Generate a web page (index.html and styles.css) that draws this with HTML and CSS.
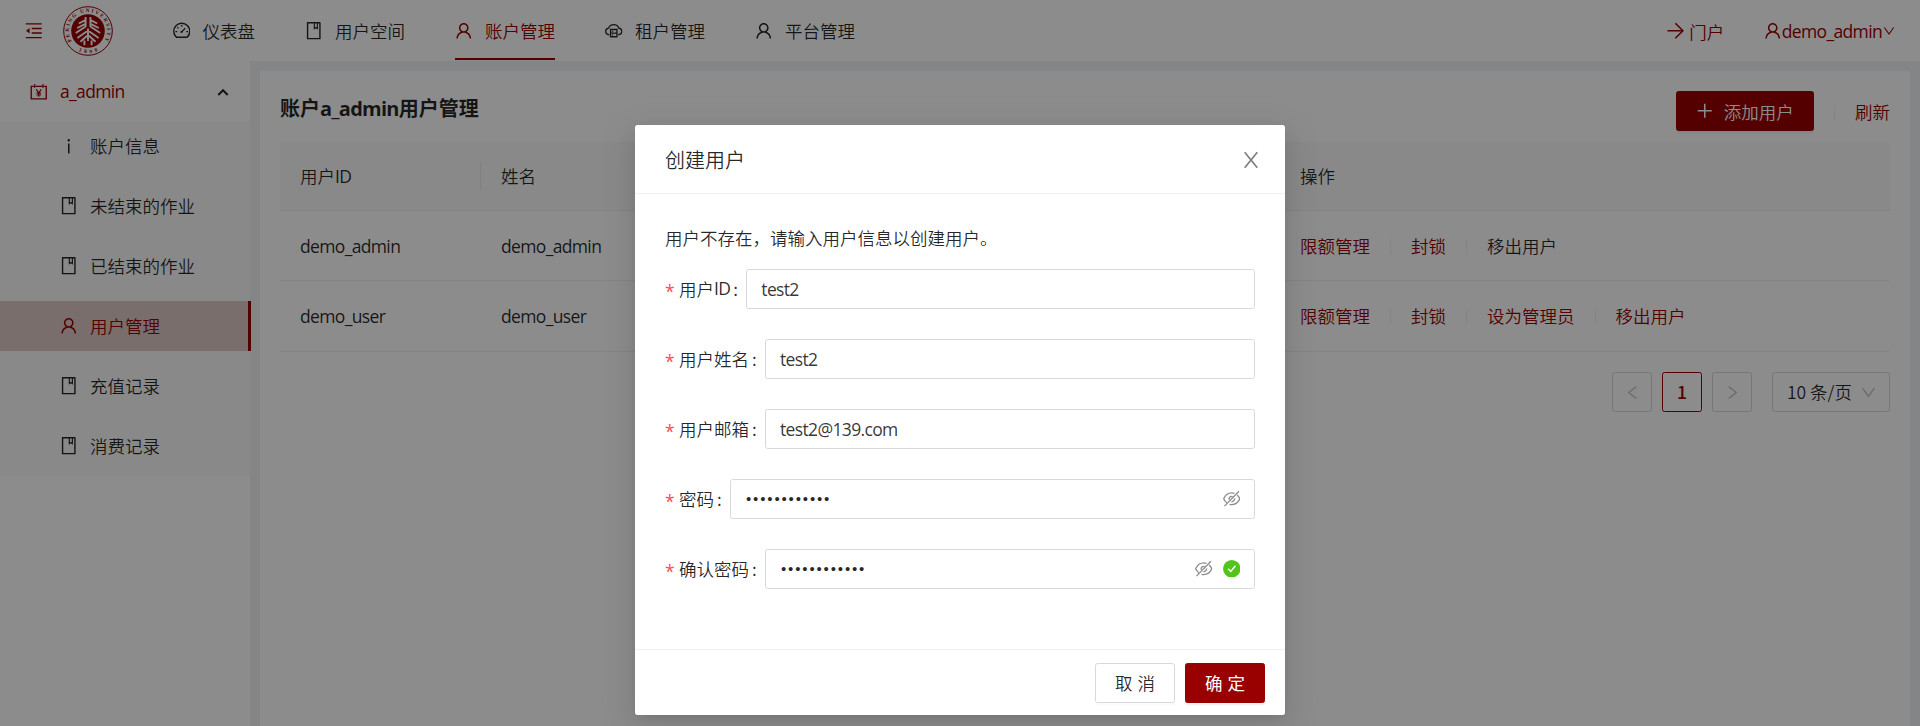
FILE: index.html
```html
<!DOCTYPE html>
<html lang="zh-CN">
<head>
<meta charset="utf-8">
<title>用户管理</title>
<link rel="stylesheet" href="styles.css">
</head>
<body>
<svg class="defs" width="0" height="0" aria-hidden="true">
  <symbol id="user" viewBox="64 64 896 896"><path fill="currentColor" d="M858.5 763.6a374 374 0 0 0-80.6-119.5 375.63 375.63 0 0 0-119.5-80.6c-.4-.2-.8-.3-1.2-.5C719.5 518 760 444.7 760 362c0-137-111-248-248-248S264 225 264 362c0 82.7 40.5 156 102.8 201.1-.4.2-.8.3-1.2.5-44.8 18.9-85 46-119.5 80.6a375.63 375.63 0 0 0-80.6 119.5A371.7 371.7 0 0 0 136 901.8a8 8 0 0 0 8 8.2h60c4.4 0 7.9-3.5 8-7.8 2-77.2 33-149.5 87.8-204.3 56.7-56.7 132-87.9 212.2-87.9s155.5 31.2 212.2 87.9C779 752.7 810 825 812 902.2c.1 4.4 3.6 7.8 8 7.8h60a8 8 0 0 0 8-8.2c-1-47.8-10.9-94.3-29.5-138.2zM512 534c-45.9 0-89.1-17.9-121.6-50.4S340 407.9 340 362c0-45.9 17.9-89.1 50.4-121.6S466.1 190 512 190s89.1 17.9 121.6 50.4S684 316.1 684 362c0 45.9-17.9 89.1-50.4 121.6S557.9 534 512 534z"/></symbol>
  <symbol id="book" viewBox="64 64 896 896"><path fill="currentColor" d="M832 64H192c-17.7 0-32 14.3-32 32v832c0 17.7 14.3 32 32 32h640c17.7 0 32-14.3 32-32V96c0-17.7-14.3-32-32-32zm-260 72h96v209.9L621.5 312 572 347.4V136zm220 752H232V136h280v296.9c0 3.3 1 6.6 3 9.3a15.9 15.9 0 0 0 22.3 3.7l83.8-59.9 81.4 59.4c2.7 2 6 3.1 9.4 3.1 8.8 0 16-7.2 16-16V136h64v752z"/></symbol>
  <symbol id="dash" viewBox="64 64 896 896"><g fill="none" stroke="currentColor" stroke-width="72"><path d="M238 846A410 410 0 1 1 786 846Z" stroke-linejoin="round"/><path d="M512 214v90M190 558h90M744 558h90M288 334l58 58M492 584L690 386" stroke-width="60"/></g><circle cx="500" cy="576" r="56" fill="currentColor"/></symbol>
  <symbol id="cloud" viewBox="0 0 1024 1024"><g fill="none" stroke="currentColor" stroke-width="78"><path d="M250 745C130 735 40 655 40 545c0-95 65-160 165-185C260 225 370 150 512 150s252 75 307 210c100 25 165 90 165 185 0 110-90 190-210 200"/><path d="M325 440h374v425H325zM325 652h374"/><path d="M410 548h70M410 758h70" stroke-width="56"/></g></symbol>
  <symbol id="fold" viewBox="64 64 896 896"><path d="M104 160h816M408 394h512M408 630h512M104 864h816" stroke="currentColor" stroke-width="76"/><path d="M115 512L300 366V658Z" fill="currentColor"/></symbol>
  <symbol id="account" viewBox="32 32 960 960"><g fill="none" stroke="currentColor" stroke-width="72"><path d="M240 220H100V900H924V220H784M330 220h364M285 100v190M739 100v190"/><path d="M375 385l137 185 137-185M512 560v220M390 590h244M390 690h244" stroke-width="64"/></g></symbol>
  <symbol id="info" viewBox="64 64 896 896"><path fill="currentColor" d="M448 224a64 64 0 1 0 128 0 64 64 0 1 0-128 0zM472 400h80v512h-80z"/></symbol>
  <symbol id="down" viewBox="64 64 896 896"><path d="M164 250L512 740 860 250" fill="none" stroke="currentColor" stroke-width="76"/></symbol>
  <symbol id="arrow" viewBox="64 64 896 896"><path d="M90 512H860M490 130L882 512 490 894" fill="none" stroke="currentColor" stroke-width="80"/></symbol>
  <symbol id="plus" viewBox="64 64 896 896"><path d="M512 150V874M150 512H874" stroke="currentColor" stroke-width="80"/></symbol>
  <symbol id="left" viewBox="64 64 896 896"><path d="M740 150L290 512 740 874" fill="none" stroke="currentColor" stroke-width="76"/></symbol>
  <symbol id="right" viewBox="64 64 896 896"><path d="M284 150L734 512 284 874" fill="none" stroke="currentColor" stroke-width="76"/></symbol>
  <symbol id="close" viewBox="0 0 1024 1024"><path d="M190 116L834 908M834 116L190 908" stroke="currentColor" stroke-width="88"/></symbol>
  <symbol id="eye" viewBox="64 64 896 896"><g fill="none" stroke="currentColor" stroke-width="70"><path d="M645 235Q582 212 512 212 235 212 100 512 160 645 253 718M400 798Q453 812 512 812 789 812 924 512 870 392 787 315"/><path d="M555 398A130 130 0 0 0 385 560M492 656A148 148 0 0 0 656 492"/><path d="M140 890L880 130"/></g></symbol>
  <symbol id="ok" viewBox="64 64 896 896"><circle cx="512" cy="512" r="448" fill="#52c41a"/><path d="M330 510L462 650 700 360" fill="none" stroke="#fff" stroke-width="72"/></symbol>
</svg>

<header class="header">
  <svg class="icon fold"><use href="#fold"/></svg>
  <svg class="logo" viewBox="0 0 50 50">
    <circle cx="25" cy="25" r="24.3" fill="#fff" stroke="#900" stroke-width="1"/>
    <circle cx="25" cy="25" r="16.8" fill="#900"/>
    <defs><path id="ring" d="M8.8 35.2A19.1 19.1 0 1 1 41.2 35.2"/><path id="ringLow" d="M12 43A22.3 22.3 0 0 0 38 43"/></defs>
    <text class="seal"><textPath href="#ring" textLength="80">PEKING UNIVERSITY</textPath></text>
    <text class="seal"><textPath href="#ringLow" startOffset="4" textLength="20">1898</textPath></text>
    <g fill="none" stroke="#fff" stroke-width="1.9"><path d="M22.6 11v9.5L12.8 27M22.4 14.2l-6.6 3.3M22.4 17.8l-8.2 4.2M27.4 11v9.5L37.2 27M27.6 14.2l6.6 3.3M27.6 17.8l8.2 4.2M25 22.5V35M25 24.5L14.4 32M25 24.5L35.6 32M25 29l-7.6 6.8M25 29l7.6 6.8M21.4 34.6v4.6M28.6 34.6v4.6"/></g>
  </svg>
  <nav class="nav">
    <a class="nav-item"><svg class="icon"><use href="#dash"/></svg><span>仪表盘</span></a>
    <a class="nav-item"><svg class="icon"><use href="#book"/></svg><span>用户空间</span></a>
    <a class="nav-item active"><svg class="icon"><use href="#user"/></svg><span>账户管理</span></a>
    <a class="nav-item"><svg class="icon"><use href="#cloud"/></svg><span>租户管理</span></a>
    <a class="nav-item"><svg class="icon"><use href="#user"/></svg><span>平台管理</span></a>
  </nav>
  <div class="header-links">
    <a class="portal"><svg class="icon"><use href="#arrow"/></svg><span>门户</span></a>
    <a class="account"><svg class="icon"><use href="#user"/></svg><span class="latin">demo_admin</span><svg class="icon caret"><use href="#down"/></svg></a>
  </div>
</header>

<div class="layout">
  <aside class="sider">
    <div class="sub-title"><svg class="icon"><use href="#account"/></svg><span class="latin">a_admin</span>
      <svg class="fold-arrow" viewBox="0 0 12 8"><path d="M1.3 7L6 2.2 10.7 7" fill="none" stroke="currentColor" stroke-width="2"/></svg></div>
    <nav class="sub-menu">
      <a class="sub-item"><svg class="icon"><use href="#info"/></svg><span>账户信息</span></a>
      <a class="sub-item"><svg class="icon"><use href="#book"/></svg><span>未结束的作业</span></a>
      <a class="sub-item"><svg class="icon"><use href="#book"/></svg><span>已结束的作业</span></a>
      <a class="sub-item active"><svg class="icon"><use href="#user"/></svg><span>用户管理</span></a>
      <a class="sub-item"><svg class="icon"><use href="#book"/></svg><span>充值记录</span></a>
      <a class="sub-item"><svg class="icon"><use href="#book"/></svg><span>消费记录</span></a>
    </nav>
  </aside>
  <main class="card">
    <div class="card-head">
      <h1 class="title">账户<span class="latin">a_admin</span>用户管理</h1>
      <div class="tools">
        <button class="btn primary add"><svg class="icon"><use href="#plus"/></svg><span>添加用户</span></button>
        <i class="divider"></i><a class="link refresh">刷新</a>
      </div>
    </div>
    <div class="table">
      <div class="row head"><div class="cell ruled">用户<span class="latin">ID</span></div><div class="cell">姓名</div><div class="cell">操作</div></div>
      <div class="row"><div class="cell latin">demo_admin</div><div class="cell latin">demo_admin</div>
        <div class="cell actions"><a class="link">限额管理</a><i class="divider"></i><a class="link">封锁</a><i class="divider"></i><span>移出用户</span></div></div>
      <div class="row last"><div class="cell latin">demo_user</div><div class="cell latin">demo_user</div>
        <div class="cell actions"><a class="link">限额管理</a><i class="divider"></i><a class="link">封锁</a><i class="divider"></i><a class="link">设为管理员</a><i class="divider"></i><a class="link">移出用户</a></div></div>
    </div>
    <div class="pager">
      <span class="page muted"><svg class="icon small"><use href="#left"/></svg></span>
      <span class="page current">1</span>
      <span class="page muted"><svg class="icon small"><use href="#right"/></svg></span>
      <span class="page-size"><span>10 条/页</span><svg class="icon small"><use href="#down"/></svg></span>
    </div>
  </main>
</div>

<div class="mask">
  <section class="modal">
    <header class="modal-head"><h2 class="modal-title">创建用户</h2><svg class="icon close"><use href="#close"/></svg></header>
    <div class="modal-body">
      <p class="hint">用户不存在，请输入用户信息以创建用户。</p>
      <div class="field"><label class="label"><b class="star">*</b>用户<span class="latin">ID</span><i class="colon">:</i></label><div class="input latin">test2</div></div>
      <div class="field"><label class="label"><b class="star">*</b>用户姓名<i class="colon">:</i></label><div class="input latin">test2</div></div>
      <div class="field"><label class="label"><b class="star">*</b>用户邮箱<i class="colon">:</i></label><div class="input latin">test2@139.com</div></div>
      <div class="field"><label class="label"><b class="star">*</b>密码<i class="colon">:</i></label><div class="input"><span class="dots">••••••••••••</span><svg class="icon eye"><use href="#eye"/></svg></div></div>
      <div class="field"><label class="label"><b class="star">*</b>确认密码<i class="colon">:</i></label><div class="input"><span class="dots">••••••••••••</span><svg class="icon eye"><use href="#eye"/></svg><svg class="icon"><use href="#ok"/></svg></div></div>
    </div>
    <footer class="modal-foot"><button class="btn">取消</button><button class="btn primary">确定</button></footer>
  </section>
</div>
</body>
</html>
```
FILE: styles.css
```css
* { box-sizing: border-box; }
body {
  margin: 0;
  height: 726px;
  overflow: hidden;
  display: flex;
  flex-direction: column;
  background: #f0f2f5;
  color: rgba(0, 0, 0, .85);
  font-family: "Noto Sans CJK SC", "Open Sans", sans-serif;
  font-size: 17.5px;
  font-weight: 350;
  line-height: 27.5px;
}
.defs { position: absolute; }
.latin { font-family: "Open Sans", "Noto Sans CJK SC", sans-serif; font-weight: 400; letter-spacing: -.65px; }
.icon { width: 17.5px; height: 17.5px; flex: none; display: block; }
.small { width: 15px; height: 15px; }
.link { color: #900; }
.divider { width: 1px; height: 16px; margin: 3px 20px 0; background: rgba(0, 0, 0, .06); flex: none; }

.header { height: 61px; flex: none; display: flex; align-items: center; background: #fff; padding-left: 25px; }
.header-links span, .refresh, .add span { padding-top: 2px; }
.fold { color: #900; }
.logo { width: 50px; height: 50px; margin-left: 20.5px; }
.seal { font: 700 5.2px "Liberation Serif", serif; fill: #900; }
.nav { display: flex; margin-left: 34.5px; height: 61px; }
.nav-item { display: flex; align-items: center; gap: 12.5px; margin: 0 25px; height: 60px; }
.nav-item .icon { margin-top: 2px; }
.nav-item.active { color: #900; box-shadow: inset 0 -2px #900; }
.nav-item span { padding-top: 1px; }
.header-links { display: flex; margin-left: auto; color: #900; padding-right: 25px; }
.portal { display: flex; align-items: center; gap: 5px; margin-right: 40px; }
.account { display: flex; align-items: center; }
.caret { width: 12px; height: 12px; margin-left: 1px; }

.layout { flex: 1; display: flex; min-height: 0; }
.sider { width: 250px; flex: none; background: #fff; }
.sub-title { height: 60px; display: flex; align-items: center; padding: 1px 21px 0 30px; gap: 12.5px; color: #900; }
.fold-arrow { width: 12px; height: 8px; margin-left: auto; color: rgba(0, 0, 0, .85); }
.sub-menu { display: flex; flex-direction: column; gap: 10px; background: #fafafa; padding-bottom: 5px; }
.sub-item { height: 50px; display: flex; align-items: center; gap: 12.5px; padding-left: 60px; }
.sub-item.active { width: 251px; color: #900; background: #dcc8c5; border-right: 3px solid #900; }

.card { flex: 1; margin: 10px 10px 0; padding: 20px 20px 0; background: #fff; }
.card-head { height: 40px; display: flex; justify-content: space-between; margin-bottom: 11px; }
.title { margin: 1px 0 0; font-size: 20px; font-weight: 700; line-height: 32px; }
.title .latin { font-weight: 700; letter-spacing: -.75px; }
.tools { display: flex; align-items: center; }
.btn {
  width: 80px; height: 40px; padding: 0; border: 1px solid #d9d9d9; border-radius: 2.5px; background: #fff;
  color: rgba(0, 0, 0, .85); font: inherit; font-size: 17.5px; letter-spacing: 5px; text-indent: 5px;
  box-shadow: 0 2.5px 0 rgba(0, 0, 0, .015);
}
.btn.primary { border-color: #900; background: #900; color: #fff; font-weight: 400; box-shadow: 0 2.5px 0 rgba(0, 0, 0, .045); }
.btn.add { width: 138px; display: flex; align-items: center; justify-content: center; gap: 10px; letter-spacing: 0; text-indent: 0; font-weight: 350; }

.table { display: flex; flex-direction: column; }
.row { display: grid; grid-template-columns: 201px 799px 1fr; height: 70px; border-bottom: 1px solid #f0f0f0; align-items: center; }
.row.last { height: 71px; padding-bottom: 1px; }
.row.head { height: 69px; background: #fafafa; border-radius: 2.5px 2.5px 0 0; }
.cell { padding-left: 20px; }
.cell.latin { padding-top: 2px; }
.cell.ruled { border-right: 1px solid rgba(0, 0, 0, .06); }
.actions { display: flex; align-items: center; }
.pager { display: flex; justify-content: flex-end; gap: 10px; margin-top: 20px; }
.page { width: 40px; height: 40px; border: 1px solid #d9d9d9; border-radius: 2.5px; display: flex; align-items: center; justify-content: center; }
.muted { color: rgba(0, 0, 0, .25); }
.page.current { border-color: #900; color: #900; font-weight: 500; }
.page-size { width: 118px; height: 40px; margin-left: 10px; padding: 0 13px 0 14px; border: 1px solid #d9d9d9; border-radius: 2.5px; display: flex; align-items: center; justify-content: space-between; }
.page-size .icon { color: rgba(0, 0, 0, .25); }

.mask { position: absolute; inset: 0; background: rgba(0, 0, 0, .45); display: flex; justify-content: center; align-items: flex-start; padding-top: 125px; }
.modal { width: 650px; height: 590px; display: flex; flex-direction: column; background: #fff; border-radius: 2.5px; box-shadow: 0 4px 8px -5px rgba(0, 0, 0, .12), 0 8px 20px rgba(0, 0, 0, .08), 0 11px 35px 10px rgba(0, 0, 0, .05); }
.modal-head { height: 69px; display: flex; align-items: center; justify-content: space-between; padding: 1px 24px 0 30px; border-bottom: 1px solid #f0f0f0; }
.modal-title { margin: 0; font-size: 20px; font-weight: 350; line-height: 28px; }
.close { width: 20px; height: 20px; color: rgba(0, 0, 0, .5); }
.modal-body { flex: 1; padding: 30px 30px 0; }
.hint { margin: 0 0 17.5px; }
.field { display: flex; align-items: center; height: 40px; margin-bottom: 30px; }
.label { display: flex; align-items: center; }
.star { width: 14px; color: #ff4d4f; font: 400 17.5px/20px "Open Sans", sans-serif; padding-top: 4px; }
.colon { font-style: normal; width: 16px; padding-left: 3px; }
.input { flex: 1; height: 40px; border: 1px solid #d9d9d9; border-radius: 2.5px; padding: 0 14px; display: flex; align-items: center; gap: 10px; }
.input.latin { padding-top: 2px; color: rgba(0, 0, 0, .8); }
.dots { flex: 1; padding-left: 1px; font-family: "Liberation Sans", sans-serif; font-size: 15px; letter-spacing: 1.85px; }
.eye { color: rgba(0, 0, 0, .45); }
.modal-foot { height: 66px; border-top: 1px solid #f0f0f0; padding: 13px 20px 0; display: flex; justify-content: flex-end; gap: 10px; }
```
